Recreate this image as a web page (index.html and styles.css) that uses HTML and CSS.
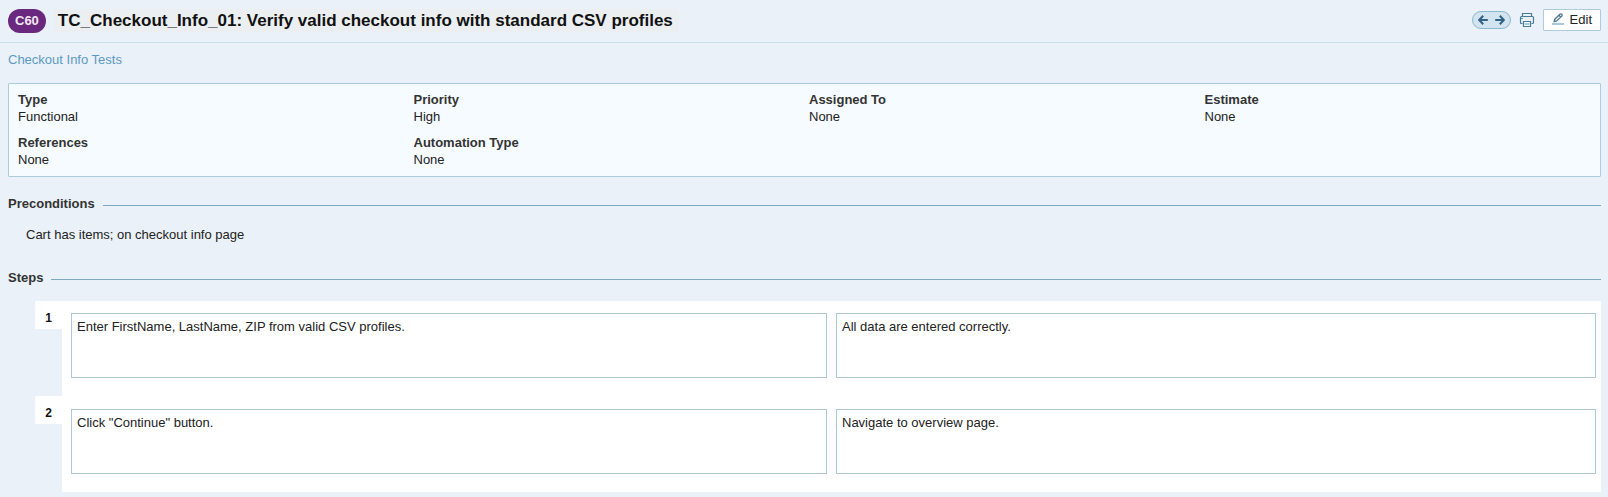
FILE: index.html
```html
<!DOCTYPE html>
<html lang="en">
<head>
<meta charset="utf-8">
<meta name="viewport" content="width=device-width, initial-scale=1">
<title>TC_Checkout_Info_01</title>
<link rel="stylesheet" href="styles.css">
</head>
<body>
<header class="header">
  <span class="badge">C60</span>
  <h1 class="title">TC_Checkout_Info_01: Verify valid checkout info with standard CSV profiles</h1>
  <div class="actions">
    <nav class="pager" aria-label="Test cases">
      <a class="pager-link" href="#previous" aria-label="Previous"><svg width="10" height="10" viewBox="0 0 10 10"><path d="M9.8 5H1.5M5.2 .8L1.2 5L5.2 9.2"/></svg></a>
      <a class="pager-link" href="#next" aria-label="Next"><svg width="10" height="10" viewBox="0 0 10 10"><path d="M.2 5H8.5M4.8 .8L8.8 5L4.8 9.2"/></svg></a>
    </nav>
    <button class="print" type="button" aria-label="Print">
      <svg width="16" height="16" viewBox="0 0 16 16" fill="none" stroke="#4a7b99" stroke-width="1.2">
        <path d="M3.5 4.5V1.5H12.5V4.5"/>
        <path d="M3.5 11.5H2.5Q1.5 11.5 1.5 10.5V5.5Q1.5 4.5 2.5 4.5H13.5Q14.5 4.5 14.5 5.5V10.5Q14.5 11.5 13.5 11.5H12.5"/>
        <path d="M4.5 14.5V9.5H11.5V14.5Z" fill="#f6fbff"/>
        <path d="M5.5 11.5H10.5M5.5 12.5H10.5" stroke="#a9c9de"/>
        <path d="M2 6.5H4" stroke="#35b58a"/>
      </svg>
    </button>
    <button class="edit" type="button">
      <svg width="12" height="12" viewBox="0 0 12 12" fill="none">
        <path d="M2.2 8.6L2.8 6.2L7.9 1.2Q8.8 .5 9.7 1.3Q10.5 2.2 9.8 3L4.7 8ZM6.9 2.2L8.7 4" stroke="#4b7894" stroke-width="1.3"/>
        <path d="M0 11H12" stroke="#82b2cf" stroke-width="1.4"/>
      </svg>
      Edit
    </button>
  </div>
</header>
<main class="content">
  <a class="section-link" href="#section">Checkout Info Tests</a>
  <dl class="info">
    <div><dt>Type</dt><dd>Functional</dd></div>
    <div><dt>Priority</dt><dd>High</dd></div>
    <div><dt>Assigned To</dt><dd>None</dd></div>
    <div><dt>Estimate</dt><dd>None</dd></div>
    <div><dt>References</dt><dd>None</dd></div>
    <div><dt>Automation Type</dt><dd>None</dd></div>
  </dl>
  <h2 class="heading">Preconditions</h2>
  <p class="preconditions">Cart has items; on checkout info page</p>
  <h2 class="heading">Steps</h2>
  <ol class="steps">
    <li class="step">
      <span class="number">1</span>
      <div class="fields">
        <div class="field">Enter FirstName, LastName, ZIP from valid CSV profiles.</div>
        <div class="field">All data are entered correctly.</div>
      </div>
    </li>
    <li class="step">
      <span class="number">2</span>
      <div class="fields">
        <div class="field">Click "Continue" button.</div>
        <div class="field">Navigate to overview page.</div>
      </div>
    </li>
  </ol>
</main>
</body>
</html>
```

FILE: styles.css
```css
* { box-sizing: border-box; }

body {
  margin: 0;
  background: #eaf1f8;
  color: #222;
  font: 13px/17px "Liberation Sans", Arial, sans-serif;
}

h1, h2, p, dl, dd, ol { margin: 0; padding: 0; }

.header {
  display: flex;
  align-items: flex-start;
  gap: 8px;
  padding: 9px 7px 9px 8px;
  border-bottom: 1px solid #cbe0ea;
}

.badge {
  padding: 0 7px;
  border-radius: 12px;
  background: #6a287e;
  color: #f3e9f5;
  font-weight: bold;
  line-height: 24px;
}

.title {
  padding: 0 6px 0 4px;
  background: #ebeff2;
  color: #111;
  font-size: 17px;
  line-height: 23px;
}

.actions {
  display: flex;
  align-items: center;
  gap: 8px;
  margin-left: auto;
}

.pager {
  display: flex;
  align-items: center;
  justify-content: space-between;
  width: 39px;
  height: 18px;
  padding: 0 5px;
  border: 1px solid #8ab8d0;
  border-radius: 9px;
  background: #d2e4ef;
}

.pager-link { display: flex; }

.pager-link svg {
  fill: none;
  stroke: #336287;
  stroke-width: 2;
}

.print {
  display: flex;
  padding: 0;
  border: 0;
  background: none;
}

.edit {
  display: flex;
  align-items: center;
  gap: 6px;
  height: 22px;
  padding: 0 8px 2px;
  border: 1px solid #aecbdc;
  border-radius: 1px;
  background: #fff;
  color: #222;
  font: inherit;
}

.content { padding: 8px 7px 5px 8px; }

.section-link {
  display: block;
  color: #5c99c2;
  text-decoration: none;
}

.info {
  display: grid;
  grid-template-columns: repeat(4, 1fr);
  row-gap: 9px;
  margin: 15px 0 18px;
  padding: 7px 0 8px 9px;
  border: 1px solid #aecbdc;
  border-radius: 1px;
  background: #f6fbff;
}

.info dt {
  color: #333;
  font-weight: bold;
}

.heading {
  display: flex;
  align-items: flex-end;
  gap: 8px;
  color: #333;
  font-size: 13px;
  line-height: 17px;
}

.heading::after {
  content: "";
  flex: 1;
  margin-bottom: 6px;
  border-top: 1px solid #7ca8c6;
}

.preconditions { padding: 14px 18px 26px; }

.steps {
  margin: 15px 0 0 27px;
  list-style: none;
}

.step {
  display: grid;
  grid-template-columns: 27px 1fr;
  align-items: start;
}

.number {
  padding-top: 7px;
  background: #fff;
  color: #111;
  font-size: 12px;
  font-weight: bold;
  line-height: 21px;
  text-align: center;
}

.fields {
  display: grid;
  grid-template-columns: 189fr 190fr;
  gap: 9px;
  padding: 12px 5px 18px 9px;
  background: #fff;
}

.step:last-child .fields { padding-top: 13px; }

.field {
  min-height: 65px;
  padding: 4px 5px;
  border: 1px solid #aec8d8;
}
```
